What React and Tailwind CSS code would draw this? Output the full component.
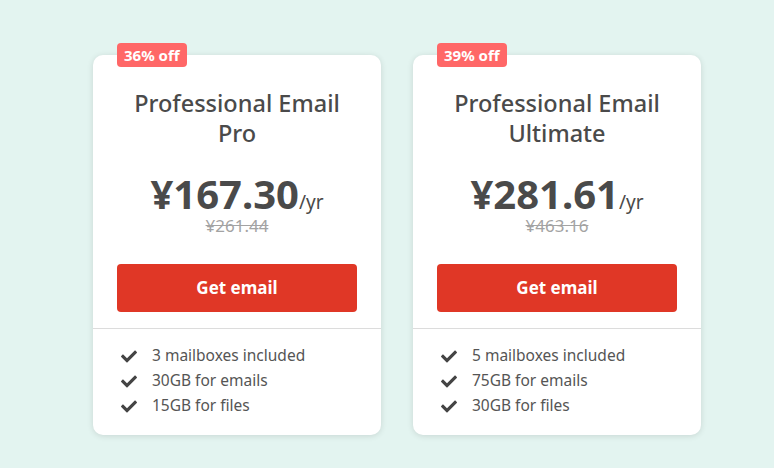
import React from 'react';

const plans = [
    {
        off: '36% off',
        name: ['Professional Email', 'Pro'],
        price: '¥167.30',
        was: '¥261.44',
        features: ['3 mailboxes included', '30GB for emails', '15GB for files'],
    },
    {
        off: '39% off',
        name: ['Professional Email', 'Ultimate'],
        price: '¥281.61',
        was: '¥463.16',
        features: ['5 mailboxes included', '75GB for emails', '30GB for files'],
    },
];

const Check = () => (
    <svg className="w-[16px] h-[14px] text-[#444]" viewBox="0 0 512 420" fill="currentColor">
        <path d="M173.9 410.6L7.5 244.2c-10-10-10-26.2 0-36.2l36.2-36.2c10-10 26.2-10 36.2 0L192 283.9 432.1 43.8c10-10 26.2-10 36.2 0l36.2 36.2c10 10 10 26.2 0 36.2L210.1 410.6c-10 10-26.2 10-36.2 0z" />
    </svg>
);

const PlanCard = ({ plan }) => (
    <div className="relative w-[288px] bg-white rounded-[10px] shadow-[0_1px_6px_rgba(0,0,0,0.12)]">
        {/* Discount badge */}
        <div className="absolute -top-[12px] left-[24px] h-[24px] px-[7px] flex items-center rounded-[4px] bg-[#ff6767] text-white text-[15px] font-bold">
            {plan.off}
        </div>

        <div className="px-[24px] pt-[33px] pb-[16px] flex flex-col items-center">
            <h2 className="text-[23.5px] leading-[30px] font-medium text-[#4a4a4a] text-center">
                {plan.name[0]}<br />{plan.name[1]}
            </h2>
            <div className="mt-[28px] flex items-baseline text-[#4a4a4a]">
                <span className="text-[40px] leading-[36px] font-bold">{plan.price}</span>
                <span className="text-[19px] leading-[20px]">/yr</span>
            </div>
            <div className="mt-[4px] text-[17px] leading-[20px] text-[#a3a3a3] line-through">{plan.was}</div>
            <button className="mt-[28px] w-full h-[48px] rounded-[4px] bg-[#e03726] text-white text-[17px] font-bold">
                Get email
            </button>
        </div>

        <div className="border-t border-[#dcdcdc] px-[28px] pt-[14px] pb-[17px] flex flex-col">
            {plan.features.map((f) => (
                <div key={f} className="flex items-center gap-[15px] h-[25px] text-[15.5px] text-[#555]">
                    <Check />
                    <span>{f}</span>
                </div>
            ))}
        </div>
    </div>
);

export default function App() {
    return (
        <div className="w-[774px] h-[468px] bg-[#e3f4f0] pt-[55px] pl-[93px] font-['Noto_Sans','Lato',sans-serif]">
            <div className="flex gap-[32px] items-start">
                {plans.map((p) => (
                    <PlanCard key={p.price} plan={p} />
                ))}
            </div>
        </div>
    );
}
